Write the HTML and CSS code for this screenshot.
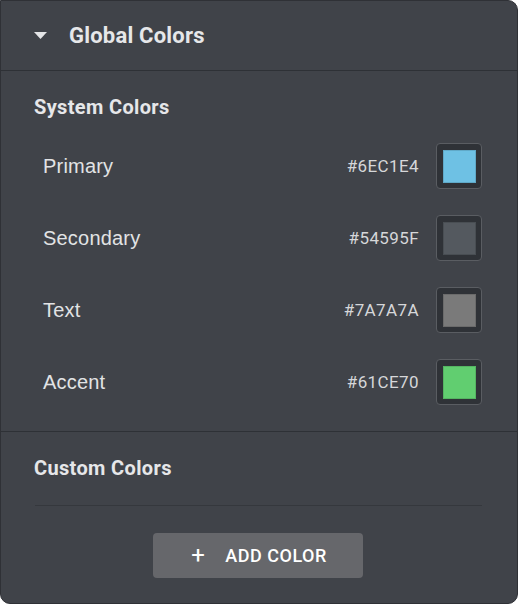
FILE: index.html
```html
<!DOCTYPE html>
<html>
<head>
<meta charset="utf-8">
<link rel="stylesheet" href="styles.css">
</head>
<body>
<div class="panel">
  <div class="panel-header">
    <svg class="caret" width="13" height="7" viewBox="0 0 13 7"><path d="M0 0 H13 L6.5 7 Z" fill="#e4e5e7"/></svg>
    <span class="panel-title">Global Colors</span>
  </div>
  <div class="section system">
    <div class="section-title">System Colors</div>
    <div class="rows">
      <div class="row">
        <span class="label">Primary</span>
        <span class="hex">#6EC1E4</span>
        <span class="swatch"><span class="fill c-primary"></span></span>
      </div>
      <div class="row">
        <span class="label">Secondary</span>
        <span class="hex">#54595F</span>
        <span class="swatch"><span class="fill c-secondary"></span></span>
      </div>
      <div class="row">
        <span class="label">Text</span>
        <span class="hex">#7A7A7A</span>
        <span class="swatch"><span class="fill c-text"></span></span>
      </div>
      <div class="row">
        <span class="label">Accent</span>
        <span class="hex">#61CE70</span>
        <span class="swatch"><span class="fill c-accent"></span></span>
      </div>
    </div>
  </div>
  <div class="section custom">
    <div class="section-title">Custom Colors</div>
    <div class="divider"></div>
    <div class="actions">
      <button class="add-btn"><span class="plus">+</span><span>ADD COLOR</span></button>
    </div>
  </div>
</div>
</body>
</html>
```

FILE: styles.css
```css
html, body {
  margin: 0;
  padding: 0;
  background: #ffffff;
}

.panel {
  width: 518px;
  box-sizing: border-box;
  background: #404349;
  border: 1px solid #2f3136;
  border-radius: 0 10px 10px 10px;
  font-family: Roboto, "Liberation Sans", sans-serif;
  color: #e3e4e6;
}

.panel-header {
  height: 69px;
  display: flex;
  align-items: center;
  padding-left: 33px;
  border-bottom: 1px solid #2e3136;
}

.caret {
  margin-top: -1px;
}

.panel-title {
  margin-left: 22px;
  font-size: 22px;
  font-weight: 700;
  letter-spacing: 0.2px;
  color: #e6e7e9;
}

.section {
  padding: 0 35px 0 33px;
}

.system {
  padding-top: 22px;
  padding-bottom: 13px;
  border-bottom: 1px solid #2e3136;
}

.section-title {
  font-size: 20px;
  font-weight: 700;
  line-height: 28px;
  letter-spacing: 0.35px;
  color: #e6e7e9;
}

.rows {
  margin-top: 9px;
}

.row {
  height: 72px;
  display: flex;
  align-items: center;
  padding-left: 9px;
}

.label {
  flex: 1;
  font-family: "Liberation Sans", Arial, sans-serif;
  font-size: 20px;
  letter-spacing: 0.2px;
  color: #e2e3e5;
}

.hex {
  font-size: 17px;
  letter-spacing: 0.4px;
  color: #d6d7d9;
  margin-right: 17px;
}

.swatch {
  width: 46px;
  height: 46px;
  box-sizing: border-box;
  border: 1px solid #5a5d62;
  border-radius: 4px;
  background: #2f3237;
  display: flex;
  align-items: center;
  justify-content: center;
}

.fill {
  width: 33px;
  height: 33px;
  box-sizing: border-box;
  border: 1px solid rgba(0, 0, 0, 0.12);
}

.c-primary { background: #6ec1e4; }
.c-secondary { background: #54595f; }
.c-text { background: #7a7a7a; }
.c-accent { background: #61ce70; }

.custom {
  padding-top: 22px;
  padding-bottom: 25px;
}

.divider {
  height: 1px;
  background: #35383d;
  margin-top: 23px;
  margin-left: 1px;
}

.actions {
  display: flex;
  justify-content: center;
  padding-top: 27px;
  padding-right: 1px;
}

.add-btn {
  width: 210px;
  height: 45px;
  border: none;
  border-radius: 4px;
  background: #66676b;
  color: #ffffff;
  font-family: Roboto, "Liberation Sans", sans-serif;
  font-size: 18px;
  font-weight: 500;
  letter-spacing: 0.5px;
  display: flex;
  align-items: center;
  justify-content: center;
  gap: 20px;
  padding: 0 0 0 3px;
}

.plus {
  font-size: 24px;
  font-weight: 400;
  line-height: 1;
  margin-top: -2px;
}
```
